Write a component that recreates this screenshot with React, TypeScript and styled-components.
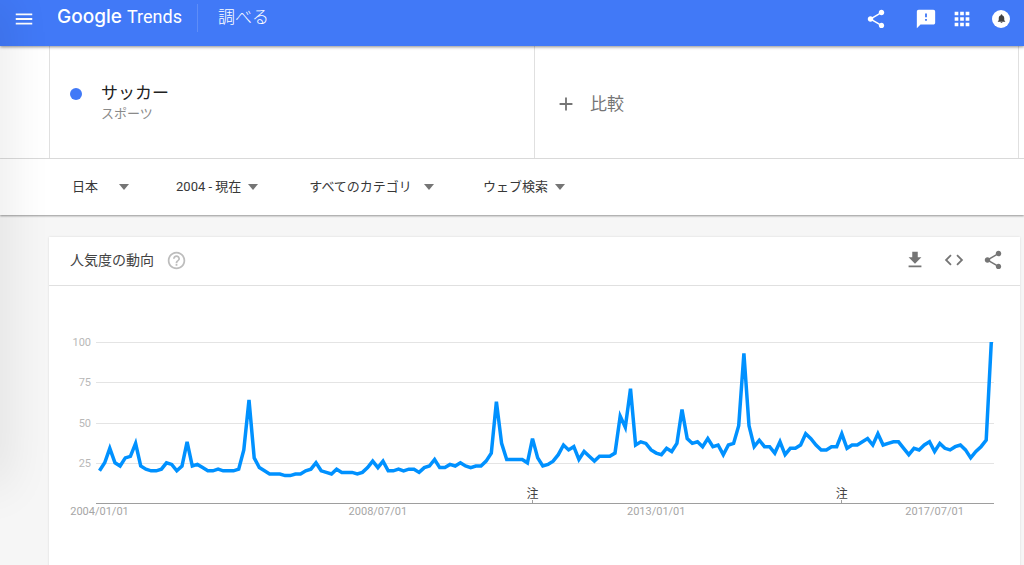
import React from 'react';
import styled, { createGlobalStyle } from 'styled-components';
import {
  MdMenu, MdShare, MdFeedback, MdApps, MdNotifications, MdAdd, MdHelpOutline, MdFileDownload, MdCode,
} from 'react-icons/md';

const GlobalStyle = createGlobalStyle`
  *, *::before, *::after { box-sizing: border-box; }
  html, body { margin: 0; }
  body {
    min-height: 100vh;
    overflow: hidden;
    background: #f6f6f6;
    color: #212121;
    font-family: Roboto, "Noto Sans CJK JP", sans-serif;
  }
`;

const IconButton = styled.button<{ $size?: number }>`
  display: inline-flex;
  align-items: center;
  justify-content: center;
  width: ${(p) => p.$size ?? 22}px;
  height: ${(p) => p.$size ?? 22}px;
  padding: 0;
  border: 0;
  background: none;
  color: inherit;
  cursor: pointer;
  svg { width: 100%; height: 100%; flex: none; }
`;

const TopBar = styled.header`
  position: relative;
  display: flex;
  align-items: flex-start;
  height: 46px;
  padding: 4px 14px 0 13px;
  background: #4179f7;
  color: #fff;
  box-shadow: 0 1px 3px rgba(0, 0, 0, 0.45);
`;

const BarItem = styled.div`
  display: flex;
  align-items: center;
  height: 30px;
`;

const Brand = styled.a`
  display: flex;
  align-items: center;
  height: 28px;
  margin-left: 23px;
  padding-right: 14px;
  border-right: 1px solid #5e8df8;
  color: #fff;
  text-decoration: none;
`;

const LogoText = styled.svg`
  display: block;
  width: 125px;
  height: 28px;
`;

const PageTitle = styled.h1`
  margin: 0 0 0 20px;
  font-size: 17px;
  line-height: 27px;
  font-weight: 300;
`;

const BarActions = styled(BarItem)`
  height: 29px;
  margin-left: auto;
  gap: 14px;
`;

const ShareSlot = styled.div`
  display: flex;
  margin-right: 14px;
`;

const Bell = styled.button`
  display: flex;
  align-items: center;
  justify-content: center;
  width: 18px;
  height: 18px;
  margin-left: 5px;
  padding: 0;
  border: 0;
  border-radius: 50%;
  background: #fff;
  color: #424242;
`;

const Terms = styled.section`
  display: grid;
  grid-template-columns: 1fr 1fr;
  height: 113px;
  padding: 0 5px 0 49px;
  background: #fff;
  border-bottom: 1px solid #e0e0e0;
`;

const Term = styled.div`
  display: flex;
  align-items: flex-start;
  padding: 35px 0 0 20px;
  border-left: 1px solid #e0e0e0;
`;

const Dot = styled.span`
  width: 12px;
  height: 12px;
  margin: 7px 19px 0 0;
  border-radius: 50%;
  background: #4179f7;
`;

const TermName = styled.div`
  font-size: 17px;
  line-height: 24px;
`;

const TermKind = styled.div`
  font-size: 13px;
  line-height: 18px;
  color: #8a8a8a;
`;

const Compare = styled.button`
  display: flex;
  align-items: center;
  gap: 13px;
  padding: 4px 0 0 20px;
  border: 1px solid #e0e0e0;
  border-width: 0 1px;
  background: none;
  color: #757575;
  font: 400 17px/24px Roboto, "Noto Sans CJK JP", sans-serif;
  text-align: left;
`;

const Filters = styled.nav`
  position: relative;
  display: flex;
  align-items: center;
  height: 56px;
  padding-left: 72px;
  background: #fff;
  box-shadow: 0 1px 2px rgba(0, 0, 0, 0.4);
`;

const Filter = styled.button<{ $gap: number; $after: number }>`
  display: flex;
  align-items: center;
  margin-right: ${(p) => p.$after}px;
  padding: 0;
  border: 0;
  background: none;
  color: #383838;
  font: 400 13px/20px Roboto, "Noto Sans CJK JP", sans-serif;
  white-space: pre;
  &::after {
    content: "";
    margin-left: ${(p) => p.$gap}px;
    border: 5px solid transparent;
    border-top: 6px solid #757575;
    border-bottom: 0;
  }
`;

const Card = styled.main`
  min-height: 340px;
  margin: 22px 4px 0 49px;
  background: #fff;
  box-shadow: 0 0 2px rgba(0, 0, 0, 0.12);
`;

const CardHead = styled.div`
  display: flex;
  align-items: center;
  height: 49px;
  padding: 0 16px 2px 21px;
  border-bottom: 1px solid #e0e0e0;
  color: #bdbdbd;
`;

const CardTitle = styled.h2`
  margin: 0 12px 0 0;
  color: #424242;
  font-size: 14px;
  line-height: 20px;
  font-weight: 400;
`;

const CardActions = styled.div`
  display: flex;
  gap: 17px;
  margin-left: auto;
  color: #757575;
`;

const Chart = styled.svg`
  display: block;
  width: 100%;
  height: auto;
  font-family: Roboto, "Noto Sans CJK JP", sans-serif;
  font-size: 11px;
`;

const DrawerEdge = styled.div`
  position: fixed;
  top: 0;
  left: -20px;
  width: 20px;
  height: 485px;
  box-shadow: 0 0 48px rgba(0, 0, 0, 0.16);
  pointer-events: none;
`;

const values = [
  20, 25, 34, 25, 23, 28, 29, 37, 23, 21, 20, 20,
  21, 25, 24, 20, 23, 38, 23, 24, 22, 20, 20, 21,
  20, 20, 20, 21, 33, 64, 28, 22, 20, 18, 18, 18,
  17, 17, 18, 18, 20, 21, 25, 20, 19, 18, 21, 19,
  19, 19, 18, 19, 22, 26, 22, 26, 20, 20, 21, 20,
  21, 21, 19, 22, 23, 27, 22, 22, 24, 23, 25, 23,
  22, 23, 23, 26, 31, 63, 37, 27, 27, 27, 27, 25,
  40, 28, 23, 24, 26, 30, 36, 33, 35, 27, 32, 29,
  26, 29, 29, 29, 31, 54, 47, 71, 36, 38, 37, 33,
  31, 30, 34, 32, 37, 58, 40, 37, 38, 35, 40, 35,
  36, 30, 36, 37, 48, 93, 48, 35, 39, 35, 35, 31,
  38, 30, 34, 34, 36, 43, 40, 36, 33, 33, 35, 35,
  43, 34, 36, 36, 38, 40, 36, 43, 36, 37, 38, 38,
  34, 30, 34, 33, 36, 38, 32, 37, 34, 33, 35, 36,
  33, 28, 32, 35, 39, 100,
];

const BASE = 217;
const monthX = (month: number) => 50.5 + month * 5.155;
const valueY = (value: number) => BASE - value * 1.61;
const line = values.map((v, i) => `${monthX(i).toFixed(1)},${valueY(v).toFixed(1)}`).join(' ');

const ticks = [
  { value: 100, y: 56 },
  { value: 75, y: 96 },
  { value: 50, y: 137 },
  { value: 25, y: 177 },
];
const dates = [
  { month: 0, label: '2004/01/01' },
  { month: 54, label: '2008/07/01' },
  { month: 108, label: '2013/01/01' },
  { month: 162, label: '2017/07/01' },
];
const notes = [84, 144];

export default function App() {
  return (
    <>
      <GlobalStyle />
      <TopBar>
        <BarItem>
          <IconButton aria-label="メニュー"><MdMenu /></IconButton>
        </BarItem>
        <Brand href="#" aria-label="Google Trends">
          <LogoText viewBox="0 0 125 28" fill="#fff">
            <text x="-1" y="19" fontFamily="Inter, sans-serif" fontSize="19" fontWeight="500">Google</text>
            <text x="69" y="19" fontFamily="Roboto, sans-serif" fontSize="18">Trends</text>
          </LogoText>
        </Brand>
        <PageTitle>調べる</PageTitle>
        <BarActions>
          <ShareSlot><IconButton aria-label="共有"><MdShare /></IconButton></ShareSlot>
          <IconButton aria-label="フィードバック"><MdFeedback /></IconButton>
          <IconButton aria-label="アプリ"><MdApps /></IconButton>
          <Bell aria-label="通知"><MdNotifications size={11} /></Bell>
        </BarActions>
      </TopBar>

      <Terms>
        <Term>
          <Dot />
          <div>
            <TermName>サッカー</TermName>
            <TermKind>スポーツ</TermKind>
          </div>
        </Term>
        <Compare><MdAdd size={22} />比較</Compare>
      </Terms>

      <Filters>
        <Filter $gap={21} $after={47}>日本</Filter>
        <Filter $gap={7} $after={51}>2004 - 現在</Filter>
        <Filter $gap={12} $after={49}>すべてのカテゴリ</Filter>
        <Filter $gap={7} $after={0}>ウェブ検索</Filter>
      </Filters>

      <Card>
        <CardHead>
          <CardTitle>人気度の動向</CardTitle>
          <IconButton $size={21} aria-label="ヘルプ"><MdHelpOutline /></IconButton>
          <CardActions>
            <IconButton aria-label="ダウンロード"><MdFileDownload /></IconButton>
            <IconButton aria-label="埋め込み"><MdCode /></IconButton>
            <IconButton aria-label="共有"><MdShare /></IconButton>
          </CardActions>
        </CardHead>
        <Chart viewBox="0 0 971 250" role="img" aria-label="人気度の動向">
          {ticks.map((t) => (
            <g key={t.value}>
              <rect x="47" y={t.y} width="898" height="1" fill="#e4e4e4" />
              <text x="42" y={t.y + 4} textAnchor="end" fill="#b8b8b8">{t.value}</text>
            </g>
          ))}
          <rect x="47" y={BASE} width="898" height="1" fill="#9e9e9e" />
          {notes.map((m) => (
            <g key={m}>
              <rect x={Math.floor(monthX(m))} y={BASE - 3} width="1" height="3" fill="#9e9e9e" />
              <text x={monthX(m)} y={BASE - 5} textAnchor="middle" fill="#424242" fontSize="12">注</text>
            </g>
          ))}
          {dates.map((d) => (
            <text key={d.month} x={monthX(d.month)} y={BASE + 12} textAnchor="middle" fill="#a6a6a6">{d.label}</text>
          ))}
          <polyline points={line} fill="none" stroke="#0091ff" strokeWidth="3.5" />
        </Chart>
      </Card>
      <DrawerEdge />
    </>
  );
}
